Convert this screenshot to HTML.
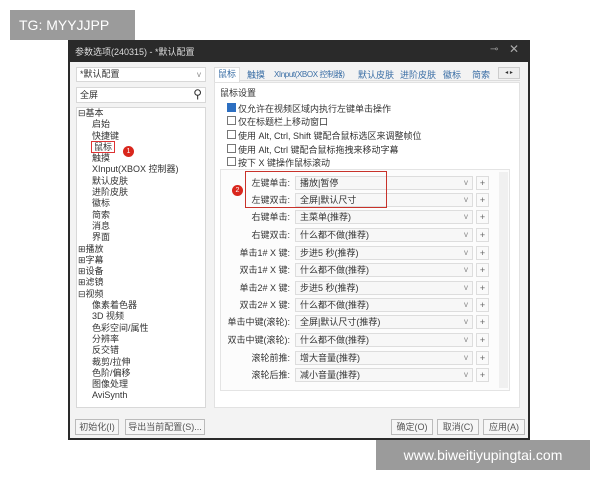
<!DOCTYPE html><html><head><meta charset="utf-8"><style>
*{margin:0;padding:0;box-sizing:border-box}
body{width:600px;height:480px;background:#fff;position:relative;overflow:hidden;font-family:"Liberation Sans","Noto Sans CJK SC",sans-serif;font-size:9px;color:#333}
.a{position:absolute;white-space:nowrap}
.win{position:absolute;left:68px;top:40px;width:462px;height:400px;background:#2a2a2a}
.body{position:absolute;left:70px;top:62px;width:458px;height:376px;background:#f3f3f3}
.box{position:absolute;background:#fff;border:1px solid #d8d8d8}
.cb{position:absolute;width:9px;height:9px;border:1px solid #777;background:#fff}
.combo{position:absolute;left:295px;width:178px;height:14px;background:#f7f7f7;border:1px solid #ddd;padding-left:4px;line-height:12px}
.combo:after{content:"v";position:absolute;right:4px;top:0;color:#888;font-size:8px}
.plus{position:absolute;left:476px;width:13px;height:14px;border:1px solid #ddd;background:#fafafa;text-align:center;line-height:12px;color:#666}
.lbl{position:absolute;right:310px;text-align:right;white-space:nowrap;line-height:14px}
.btn{position:absolute;height:16px;border:1px solid #bbb;background:#f6f6f6;text-align:center;line-height:14px;color:#555}
.red{position:absolute;width:11px;height:11px;border-radius:50%;background:#d9261c;color:#fff;font-size:7px;text-align:center;line-height:11px}
.tab{position:absolute;top:68px;color:#3a6ea5;white-space:nowrap}
</style></head><body>
<div class="a" style="left:10px;top:10px;width:125px;height:30px;background:#9b9b9b;color:#fff;font-size:14px;line-height:30px;padding-left:9px">TG: MYYJJPP</div>
<div class="win"></div>
<div class="a" style="left:75px;top:45px;color:#ddd;font-size:9px">参数选项(240315) - *默认配置</div>
<div class="a" style="left:490px;top:44px;color:#999;font-size:10px">⊸</div>
<div class="a" style="left:509px;top:42px;color:#aaa;font-size:12px">✕</div>
<div class="body"></div>
<div class="box" style="left:76px;top:67px;width:130px;height:15px;padding-left:3px;line-height:13px">*默认配置<span style="position:absolute;right:4px;color:#888;font-size:8px">v</span></div>
<div class="box" style="left:76px;top:87px;width:130px;height:16px;padding-left:3px;line-height:14px">全屏<span style="position:absolute;right:3px;top:-1px;font-size:12px">⚲</span></div>
<div class="box" style="left:76px;top:107px;width:130px;height:301px"></div>
<div class="a" style="left:78px;top:108px;line-height:11.3px">
<div>⊟基本</div><div style="padding-left:14px">启始<br>快捷键<br><span style="outline:1px solid #d33;padding:0 2px">鼠标</span><br>触摸<br>XInput(XBOX 控制器)<br>默认皮肤<br>进阶皮肤<br>徽标<br>简索<br>消息<br>界面</div>
<div>⊞播放<br>⊞字幕<br>⊞设备<br>⊞滤镜<br>⊟视频</div>
<div style="padding-left:14px">像素着色器<br>3D 视频<br>色彩空间/属性<br>分辨率<br>反交错<br>裁剪/拉伸<br>色阶/偏移<br>图像处理<br>AviSynth</div></div>
<div class="red" style="left:123px;top:146px">1</div>
<div class="a" style="left:214px;top:66px;width:306px;height:15px;border-bottom:1px solid #ddd"></div>
<div class="a" style="left:214px;top:67px;background:#fff;border:1px solid #ddd;border-bottom:none;padding:0 3px;height:15px;color:#3a6ea5;line-height:13px">鼠标</div>
<div class="tab" style="left:247px">触摸</div>
<div class="tab" style="left:274px;font-size:8px;letter-spacing:-0.4px;top:69px">XInput(XBOX 控制器)</div>
<div class="tab" style="left:358px">默认皮肤</div>
<div class="tab" style="left:400px">进阶皮肤</div>
<div class="tab" style="left:443px">徽标</div>
<div class="tab" style="left:472px">简索</div>
<div class="a" style="left:498px;top:67px;width:22px;height:12px;border:1px solid #ccc;background:#eee;font-size:6px;line-height:10px;text-align:center">◂ ▸</div>
<div class="box" style="left:214px;top:82px;width:306px;height:326px;border-color:#e2e2e2"></div>
<div class="a" style="left:220px;top:86px">鼠标设置</div>
<div class="cb" style="left:227px;top:103px;background:#2d6fc1;border-color:#2d6fc1"></div>
<div class="a" style="left:238px;top:102px">仅允许在视频区域内执行左键单击操作</div>
<div class="cb" style="left:227px;top:116px"></div><div class="a" style="left:238px;top:115px">仅在标题栏上移动窗口</div>
<div class="cb" style="left:227px;top:130px"></div><div class="a" style="left:238px;top:129px">使用 Alt, Ctrl, Shift 键配合鼠标选区来调整帧位</div>
<div class="cb" style="left:227px;top:144px"></div><div class="a" style="left:238px;top:143px">使用 Alt, Ctrl 键配合鼠标拖拽来移动字幕</div>
<div class="cb" style="left:227px;top:157px"></div><div class="a" style="left:238px;top:156px">按下 X 键操作鼠标滚动</div>
<div class="a" style="left:220px;top:169px;width:290px;height:222px;border:1px solid #e4e4e4;background:#fcfcfc"></div>
<div class="a" style="left:499px;top:172px;width:9px;height:216px;background:#f0f0f0"></div>
<div class="lbl" style="top:176px">左键单击:</div><div class="combo" style="top:176px">播放|暂停</div><div class="plus" style="top:176px">+</div>
<div class="lbl" style="top:193px">左键双击:</div><div class="combo" style="top:193px">全屏|默认尺寸</div><div class="plus" style="top:193px">+</div>
<div class="lbl" style="top:210px">右键单击:</div><div class="combo" style="top:210px">主菜单(推荐)</div><div class="plus" style="top:210px">+</div>
<div class="lbl" style="top:228px">右键双击:</div><div class="combo" style="top:228px">什么都不做(推荐)</div><div class="plus" style="top:228px">+</div>
<div class="lbl" style="top:246px">单击1# X 键:</div><div class="combo" style="top:246px">步进5 秒(推荐)</div><div class="plus" style="top:246px">+</div>
<div class="lbl" style="top:263px">双击1# X 键:</div><div class="combo" style="top:263px">什么都不做(推荐)</div><div class="plus" style="top:263px">+</div>
<div class="lbl" style="top:281px">单击2# X 键:</div><div class="combo" style="top:281px">步进5 秒(推荐)</div><div class="plus" style="top:281px">+</div>
<div class="lbl" style="top:298px">双击2# X 键:</div><div class="combo" style="top:298px">什么都不做(推荐)</div><div class="plus" style="top:298px">+</div>
<div class="lbl" style="top:315px">单击中键(滚轮):</div><div class="combo" style="top:315px">全屏|默认尺寸(推荐)</div><div class="plus" style="top:315px">+</div>
<div class="lbl" style="top:333px">双击中键(滚轮):</div><div class="combo" style="top:333px">什么都不做(推荐)</div><div class="plus" style="top:333px">+</div>
<div class="lbl" style="top:351px">滚轮前推:</div><div class="combo" style="top:351px">增大音量(推荐)</div><div class="plus" style="top:351px">+</div>
<div class="lbl" style="top:368px">滚轮后推:</div><div class="combo" style="top:368px">减小音量(推荐)</div><div class="plus" style="top:368px">+</div>
<div class="a" style="left:245px;top:171px;width:142px;height:37px;border:1.5px solid #c8322a"></div>
<div class="red" style="left:232px;top:185px">2</div>
<div class="btn" style="left:75px;top:419px;width:44px">初始化(I)</div>
<div class="btn" style="left:125px;top:419px;width:80px">导出当前配置(S)...</div>
<div class="btn" style="left:391px;top:419px;width:42px">确定(O)</div>
<div class="btn" style="left:437px;top:419px;width:42px">取消(C)</div>
<div class="btn" style="left:483px;top:419px;width:42px">应用(A)</div>
<div class="a" style="left:376px;top:440px;width:214px;height:30px;background:#9b9b9b;color:#fff;font-size:14px;line-height:30px;text-align:center">www.biweitiyupingtai.com</div>
</body></html>
